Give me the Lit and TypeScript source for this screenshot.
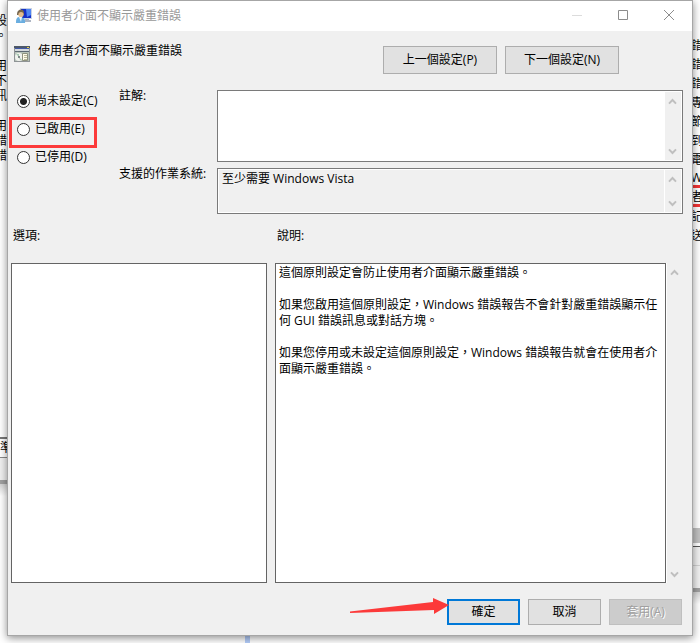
import { LitElement, html, css, svg } from "lit";
import { customElement, property, state } from "lit/decorators.js";

const DESCRIPTION = `這個原則設定會防止使用者介面顯示嚴重錯誤。

如果您啟用這個原則設定，Windows 錯誤報告不會針對嚴重錯誤顯示任何 GUI 錯誤訊息或對話方塊。

如果您停用或未設定這個原則設定，Windows 錯誤報告就會在使用者介面顯示嚴重錯誤。`;

const STATES = [
  { id: "none", label: "尚未設定(C)", marked: false },
  { id: "on", label: "已啟用(E)", marked: true },
  { id: "off", label: "已停用(D)", marked: false },
];

const LEFT_LINES = ["設", "。", "", "用", "不", "訊", "", "用", "錯", "錯"];
const RIGHT_LINES = ["錯", "錯", "錯", "專", "節", "到", "電", "W", "者", "記", "送"];

/* Disabled scroll bar with an arrow at each end. */
@customElement("scroll-rail")
export class ScrollRail extends LitElement {
  static styles = css`
    :host {
      display: flex;
      flex-direction: column;
      justify-content: space-between;
      flex: none;
      width: 16px;
      background: #f0f0f0;
    }
    .arrow {
      display: block;
      width: 16px;
      height: 17px;
      fill: none;
      stroke: #bfbfbf;
      stroke-width: 2;
    }
  `;
  render() {
    return html`
      <svg class="arrow" viewBox="0 0 16 17" aria-hidden="true">${svg`<path d="M4 11.6 L7.5 8 L11 11.6"/>`}</svg>
      <svg class="arrow" viewBox="0 0 16 17" aria-hidden="true">${svg`<path d="M4 6.4 L7.5 10 L11 6.4"/>`}</svg>
    `;
  }
}

/* Slices of the editor windows that lie behind the dialog. */
@customElement("back-window")
export class BackWindow extends LitElement {
  @property({ reflect: true }) side: "left" | "right" = "left";

  static styles = css`
    :host {
      display: block;
      overflow: hidden;
      background: #fff;
      color: #000;
    }
    .lines {
      display: flex;
      flex-direction: column;
      box-sizing: border-box;
      white-space: nowrap;
    }
    .left .lines {
      height: 437px;
      padding-top: 13px;
      align-items: flex-end;
      margin-right: 2px;
    }
    .left .line {
      height: 15px;
      line-height: 15px;
    }
    .right .lines {
      height: 528px;
      padding-top: 36px;
    }
    .right .line {
      height: 19px;
      line-height: 19px;
      box-sizing: border-box;
    }
    .right .line.ruled {
      border-bottom: 3px solid #f23535;
      line-height: 18px;
    }
    .status {
      height: 18px;
      line-height: 18px;
      border-top: 2px solid #777;
      border-bottom: 1px solid #888;
      overflow: hidden;
    }
    .foot {
      height: 22px;
      background: #f0f0f0;
      border-bottom: 4px solid #a0a0a0;
    }
    .thumb {
      height: 15px;
      background: #c1c1c1;
      margin-bottom: 3px;
    }
    .panel {
      height: 18px;
      background: #f0f0f0;
      border-top: 1px solid #555;
      border-bottom: 1px solid #d0d0d0;
    }
    .after {
      height: 12px;
      background: linear-gradient(#d4d4d4, #fff);
    }
  `;
  render() {
    return this.side === "left"
      ? html`<div class="left">
          <div class="lines">${LEFT_LINES.map((t) => html`<span class="line">${t}</span>`)}</div>
          <div class="status">準</div>
          <div class="foot"></div>
          <div class="after"></div>
        </div>`
      : html`<div class="right">
          <div class="lines">
            ${RIGHT_LINES.map((t, i) => html`<span class="line ${i === 7 || i === 8 ? "ruled" : ""}">${t}</span>`)}
          </div>
          <div class="thumb"></div>
          <div class="panel"></div>
          <div class="foot"></div>
          <div class="after"></div>
        </div>`;
  }
}

@customElement("app-root")
export class AppRoot extends LitElement {
  @state() private choice = "none";

  static styles = css`
    :host {
      display: block;
      position: relative;
      min-height: 100vh;
      overflow: hidden;
      background: #fff;
      font: 12px/16px "Open Sans", "Noto Sans CJK TC", sans-serif;
      color: #000;
    }
    .behind {
      position: absolute;
      top: 0;
      bottom: 0;
    }
    .behind-left {
      left: 0;
      width: 9px;
    }
    .behind-right {
      right: 0;
      width: 9px;
    }
    .stripe {
      position: absolute;
      left: 245px;
      bottom: 0;
      width: 5px;
      height: 9px;
      background: #b4cdfa;
    }
    .dialog {
      position: relative;
      display: flex;
      flex-direction: column;
      box-sizing: border-box;
      min-height: calc(100vh - 7px);
      margin: 0 7px 7px;
      border: 1px solid #a6a6a6;
      background: #f0f0f0;
      box-shadow: 0 2px 8px rgba(0, 0, 0, 0.45);
    }
    .titlebar {
      display: flex;
      align-items: center;
      height: 30px;
      padding-left: 8px;
      background: #fff;
      color: #999;
    }
    .app-icon {
      flex: none;
      width: 16px;
      height: 16px;
    }
    .caption {
      flex: 1;
      margin: 0 0 0 5px;
      font-size: 12px;
      font-weight: normal;
    }
    .win {
      display: flex;
      align-items: center;
      justify-content: center;
      width: 46px;
      height: 30px;
      padding: 0;
      border: 0;
      background: none;
    }
    .glyph {
      width: 12px;
      height: 12px;
      fill: none;
      stroke: #8c8c8c;
    }
    .faint {
      stroke: #dcdcdc;
    }
    .head {
      display: flex;
      align-items: flex-start;
      padding: 15px 73px 0 6px;
      height: 44px;
      gap: 8px;
    }
    .policy {
      flex: 1;
      margin: -3px 0 0;
      font-size: 12px;
      font-weight: normal;
    }
    .btn {
      box-sizing: border-box;
      height: 26px;
      width: 73px;
      padding: 0;
      border: 1px solid #adadad;
      background: #e1e1e1;
      color: #000;
      font: inherit;
    }
    .nav {
      width: 114px;
      height: 28px;
    }
    .default {
      border: 2px solid #0078d7;
    }
    .btn:disabled {
      border-color: #bfbfbf;
      background: #ccc;
      color: #a0a0a0;
      text-shadow: 1px 1px #fff;
    }
    .setup {
      display: grid;
      grid-template-columns: 102px 98px 1fr;
      padding: 0 9px;
    }
    .states {
      display: flex;
      flex-direction: column;
      gap: 12px;
      margin: 0;
      padding: 3px 0 0;
      border: 0;
      min-width: 0;
    }
    .choice {
      position: relative;
      display: flex;
      align-items: center;
      gap: 5px;
      height: 16px;
    }
    .radio {
      appearance: none;
      box-sizing: border-box;
      width: 13px;
      height: 13px;
      margin: 0;
      border: 1px solid #333;
      border-radius: 50%;
      background: #fff;
    }
    .radio:checked {
      background: radial-gradient(circle, #222 0 3px, #fff 4px);
    }
    .marked::after {
      content: "";
      position: absolute;
      box-sizing: border-box;
      left: -8px;
      top: -4px;
      width: 88px;
      height: 31px;
      border: 3px solid #fc3a3a;
      pointer-events: none;
    }
    .labels,
    .fields {
      display: flex;
      flex-direction: column;
      gap: 6px;
    }
    .labels {
      margin-top: -2px;
    }
    .label-tall {
      height: 72px;
    }
    .field {
      display: flex;
      box-sizing: border-box;
      height: 72px;
      padding: 1px;
      border: 1px solid #7a7a7a;
      background: #fff;
    }
    .field-short {
      height: 46px;
      gap: 1px;
    }
    .text {
      flex: 1;
      display: block;
      box-sizing: border-box;
      min-width: 0;
      margin: 0;
      padding: 1px 3px;
      border: 0;
      outline: 0;
      resize: none;
      overflow: hidden;
      background: #fff;
      color: #000;
      font: inherit;
    }
    .locked {
      background: #f0f0f0;
    }
    .panes {
      display: grid;
      grid-template-columns: 32fr 51fr;
      grid-template-rows: auto 1fr;
      column-gap: 8px;
      flex: 1;
      min-height: 240px;
      padding: 14px 9px 0 3px;
    }
    .pane-label {
      height: 35px;
      padding-left: 2px;
    }
    .pane {
      border: 1px solid #646464;
      background: #fff;
    }
    .help {
      display: flex;
      gap: 1px;
      background: #fff;
    }
    .help-text {
      border: 1px solid #646464;
    }
    .actions {
      position: relative;
      display: flex;
      justify-content: flex-end;
      gap: 8px;
      padding: 16px 10px 10px;
    }
    .pointer {
      position: absolute;
      right: 243px;
      top: 14px;
      width: 100px;
      height: 20px;
      fill: #fc3a3a;
      pointer-events: none;
    }
  `;

  render() {
    return html`
      <back-window class="behind behind-left" side="left"></back-window>
      <back-window class="behind behind-right" side="right"></back-window>
      <div class="stripe"></div>
      <main class="dialog" lang="zh-Hant">
        <header class="titlebar">
          <svg class="app-icon" viewBox="0 0 16 16" aria-hidden="true">
            <path d="M4 0h12v11H5z" fill="#c9d2e4" />
            <path d="M5 1h10v9H5z" fill="#1430c8" />
            <path d="M10 1h5v6l-4 2z" fill="#4f86f2" />
            <path d="M9 11h4v1h2v2H9z" fill="#aeb6c4" />
            <path d="M0 15c0-5 1-6 4-6s6 2 5 6z" fill="#6aaee0" />
            <path d="M3 9h3l-1 5z" fill="#e9f4fc" />
            <path d="M1 6c0-5 6-6 7-2v3H1z" fill="#76664d" />
            <circle cx="5" cy="6.5" r="2.6" fill="#e3bc8c" />
          </svg>
          <h1 class="caption">使用者介面不顯示嚴重錯誤</h1>
          <button class="win" aria-label="最小化" disabled>
            <svg class="glyph faint" viewBox="0 0 12 12"><path d="M1 5.5h10" /></svg>
          </button>
          <button class="win" aria-label="最大化">
            <svg class="glyph" viewBox="0 0 12 12"><path d="M1.5 0.5h9v9h-9z" /></svg>
          </button>
          <button class="win" aria-label="關閉">
            <svg class="glyph" viewBox="0 0 12 12"><path d="M1 0l10 10M11 0L1 10" /></svg>
          </button>
        </header>

        <section class="head">
          <svg class="app-icon" viewBox="0 0 16 16" aria-hidden="true">
            <path d="M0 0h16v16H0z" fill="#8f9496" />
            <path d="M0 0h16v2H0z" fill="#4d5868" />
            <path d="M1 2h14v1H1z" fill="#4058a8" />
            <path d="M1 3h14v2H1z" fill="#d5d9dc" />
            <path d="M1 5h14v1H1z" fill="#5c6872" />
            <path d="M1 6h14v9H1z" fill="#b7c3b9" />
            <circle cx="5" cy="11" r="4" fill="#f0f2ee" />
            <path d="M5 11L2 8h3zM5 11l3 3H6z" fill="#a5c9b1" />
            <circle cx="5" cy="11" r="1" fill="#626a6e" />
            <path d="M8.500 7.500h5v7h-5z" fill="#fffbe8" stroke="#8f927f" />
            <path d="M10 9.500h3M10 11.500h3M10 13.500h3" stroke="#b9b89c" />
            <path d="M13 1h2v1h-2z" fill="#e8d04a" />
          </svg>
          <h2 class="policy">使用者介面不顯示嚴重錯誤</h2>
          <button class="btn nav">上一個設定(P)</button>
          <button class="btn nav">下一個設定(N)</button>
        </section>

        <section class="setup">
          <fieldset class="states" aria-label="狀態">
            ${STATES.map(
              (s) => html`<label class="choice ${s.marked ? "marked" : ""}">
                <input
                  class="radio"
                  type="radio"
                  name="state"
                  .checked=${this.choice === s.id}
                  @change=${() => (this.choice = s.id)}
                />${s.label}
              </label>`,
            )}
          </fieldset>
          <div class="labels">
            <label class="label-tall" for="comment">註解:</label>
            <label for="supported">支援的作業系統:</label>
          </div>
          <div class="fields">
            <div class="field">
              <textarea class="text" id="comment"></textarea>
              <scroll-rail></scroll-rail>
            </div>
            <div class="field field-short">
              <textarea class="text locked" id="supported" readonly .value=${"至少需要 Windows Vista"}></textarea>
              <scroll-rail></scroll-rail>
            </div>
          </div>
        </section>

        <section class="panes">
          <span class="pane-label">選項:</span>
          <label class="pane-label" for="help">說明:</label>
          <div class="pane"></div>
          <div class="help">
            <textarea class="text help-text" id="help" readonly .value=${DESCRIPTION}></textarea>
            <scroll-rail></scroll-rail>
          </div>
        </section>

        <footer class="actions">
          <button class="btn default">確定</button>
          <button class="btn">取消</button>
          <button class="btn" disabled>套用(A)</button>
          <svg class="pointer" viewBox="0 0 100 20" aria-hidden="true">
            <path d="M1 14.5L84 5V1L100 8L85 17V13L1 16z" />
          </svg>
        </footer>
      </main>
    `;
  }
}
